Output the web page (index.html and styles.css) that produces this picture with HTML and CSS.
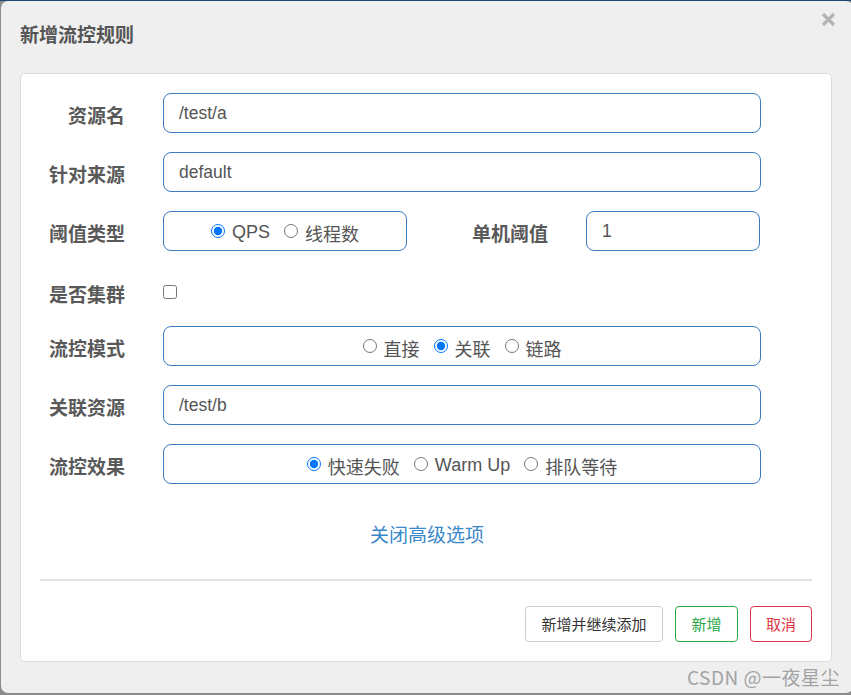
FILE: index.html
```html
<!DOCTYPE html>
<html lang="zh">
<head>
<meta charset="utf-8">
<title>新增流控规则</title>
<link rel="stylesheet" href="styles.css">
</head>
<body>
<div class="dialog">
  <div class="dialog-header">
    <h3 class="dialog-title">新增流控规则</h3>
    <button class="close" type="button" aria-label="close">
      <svg width="15" height="15" viewBox="0 0 15 15"><path d="M2 2 L13 13 M13 2 L2 13" stroke="#b3b3b3" stroke-width="3.2" stroke-linecap="butt"/></svg>
    </button>
  </div>
  <div class="panel">
    <div class="form">
      <div class="row">
        <label class="label">资源名</label>
        <input class="field" type="text" value="/test/a">
      </div>
      <div class="row">
        <label class="label">针对来源</label>
        <input class="field" type="text" value="default">
      </div>
      <div class="row">
        <label class="label">阈值类型</label>
        <div class="radio-box narrow">
          <label class="opt"><input type="radio" name="grade" checked><span>QPS</span></label>
          <label class="opt"><input type="radio" name="grade"><span>线程数</span></label>
        </div>
        <label class="label label2">单机阈值</label>
        <input class="field small" type="text" value="1">
      </div>
      <div class="row check-row">
        <label class="label">是否集群</label>
        <input class="check" type="checkbox">
      </div>
      <div class="row">
        <label class="label">流控模式</label>
        <div class="radio-box">
          <label class="opt"><input type="radio" name="mode"><span>直接</span></label>
          <label class="opt"><input type="radio" name="mode" checked><span>关联</span></label>
          <label class="opt"><input type="radio" name="mode"><span>链路</span></label>
        </div>
      </div>
      <div class="row">
        <label class="label">关联资源</label>
        <input class="field" type="text" value="/test/b">
      </div>
      <div class="row">
        <label class="label">流控效果</label>
        <div class="radio-box">
          <label class="opt"><input type="radio" name="effect" checked><span>快速失败</span></label>
          <label class="opt"><input type="radio" name="effect"><span>Warm Up</span></label>
          <label class="opt"><input type="radio" name="effect"><span>排队等待</span></label>
        </div>
      </div>
    </div>
    <div class="link-row"><a class="toggle-link">关闭高级选项</a></div>
    <div class="separator"></div>
    <div class="footer">
      <button class="btn btn-default" type="button">新增并继续添加</button>
      <button class="btn btn-success" type="button">新增</button>
      <button class="btn btn-danger" type="button">取消</button>
    </div>
  </div>
  <div class="watermark">CSDN @一夜星尘</div>
</div>
</body>
</html>
```

FILE: styles.css
```css
* { box-sizing: border-box; }
html, body {
  margin: 0;
  padding: 0;
  width: 851px;
  height: 695px;
  overflow: hidden;
}
body {
  background: #8c8c8c;
  border-top: 1px solid #1d4872;
  padding-left: 1px;
  font-family: "Liberation Sans", "Noto Sans CJK SC", sans-serif;
}
.dialog {
  position: relative;
  width: 852px;
  height: 692px;
  background: #efefef;
  border-radius: 7px;
  padding: 0 20px 0 19px;
}
.dialog-header {
  height: 72px;
  display: flex;
  align-items: flex-start;
  justify-content: space-between;
}
.dialog-title {
  margin: 20px 0 0 0;
  font-family: "Noto Sans CJK SC", sans-serif;
  font-size: 19px;
  line-height: 26px;
  font-weight: 700;
  color: #555;
}
.close {
  margin: 11px -3px 0 0;
  padding: 0;
  border: 0;
  background: transparent;
  width: 15px;
  height: 15px;
  line-height: 0;
}
.panel {
  width: 812px;
  background: #fff;
  border: 1px solid #dcdcdc;
  border-radius: 5px;
}
.form {
  padding: 19px 70px 0 0;
  display: flex;
  flex-direction: column;
  gap: 19px;
}
.row {
  display: flex;
  align-items: center;
  height: 40px;
}
.label {
  width: 104px;
  margin-right: 38px;
  text-align: right;
  font-family: "Noto Sans CJK SC", sans-serif;
  font-size: 19px;
  font-weight: 700;
  color: #595959;
  padding-top: 3px;
  flex: none;
}
.label2 {
  width: 141px;
}
.field {
  flex: 1;
  height: 40px;
  border: 1px solid #3a7cbf;
  border-radius: 8px;
  padding: 0 15px 0;
  font-family: "Liberation Sans", "Noto Sans CJK SC", sans-serif;
  font-size: 17.5px;
  color: #555;
  background: #fff;
  outline: none;
}
.field.small {
  flex: none;
  width: 174px;
}
.radio-box {
  flex: 1;
  height: 40px;
  border: 1px solid #3a7cbf;
  border-radius: 8px;
  display: flex;
  align-items: center;
  justify-content: center;
  gap: 14px;
  padding-top: 3px;
}
.radio-box.narrow {
  flex: none;
  width: 244px;
}
.opt {
  display: flex;
  align-items: center;
  gap: 7px;
  font-family: "Liberation Sans", "Noto Sans CJK SC", sans-serif;
  font-size: 18px;
  color: #555;
}
.opt input {
  margin: 0;
  width: 14px;
  height: 14px;
  position: relative;
  top: -2px;
}
.check-row {
  height: 37px;
  padding-top: 6px;
}
.check {
  margin: 0;
  width: 14px;
  height: 14px;
}
.link-row {
  margin-top: 31px;
  height: 38px;
  line-height: 38px;
  text-align: center;
  padding-left: 2px;
}
.toggle-link {
  font-family: "Noto Sans CJK SC", sans-serif;
  font-size: 19px;
  color: #3b88c9;
  text-decoration: none;
}
.separator {
  margin: 26px 19px 0 19px;
  height: 2px;
  background: #e2e2e2;
}
.footer {
  display: flex;
  justify-content: flex-end;
  gap: 12px;
  padding: 25px 19px 19px 0;
}
.btn {
  height: 36px;
  padding: 0 10px;
  border-radius: 4px;
  background: #fff;
  font-family: "Noto Sans CJK SC", sans-serif;
  font-size: 15px;
  line-height: 34px;
}
.btn-default {
  width: 138px;
  border: 1px solid #cccccc;
  color: #333;
}
.btn-success {
  width: 63px;
  border: 1px solid #28a745;
  color: #28a745;
}
.btn-danger {
  width: 62px;
  border: 1px solid #dc3545;
  color: #dc3545;
}
.watermark {
  position: absolute;
  right: 13px;
  bottom: 3px;
  font-family: "Noto Sans CJK SC", sans-serif;
  font-size: 19px;
  color: #a3a3a3;
  letter-spacing: 0.5px;
}
```
